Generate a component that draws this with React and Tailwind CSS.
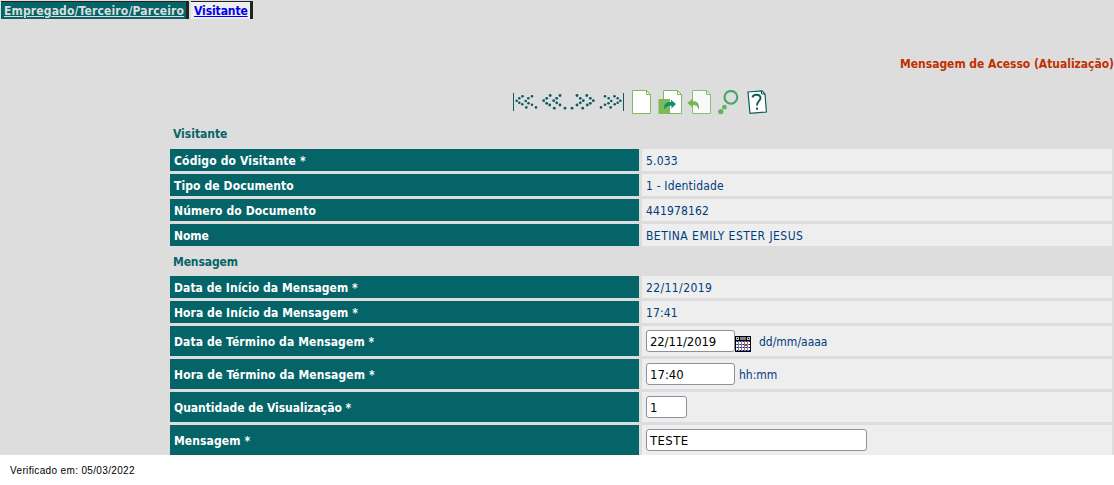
// Left half of the record navigation: "first" and "previous" double chevrons
const SMALL = [[3.7, 9.7], [6.3, 7.3], [9.5, 5.3], [6.3, 11.7], [9.3, 13.3], [13.3, 16.4], [12.7, 10], [15.3, 7.3], [19, 5.3], [15.5, 12.3], [19, 13.7], [23, 16.4]];
const LARGE = [[30.7, 9.7], [33.7, 7.3], [37.2, 4.5], [33.7, 12.3], [36.7, 14], [41.3, 17.2], [40.7, 9.7], [43.7, 7.3], [47, 4.5], [43.7, 11.8], [47, 14], [52, 17.2]];

function NavHalf() {
  return (
    <g fill="#0b5c5c">
      <rect x="0" y="2" width="1" height="18" />
      {SMALL.map(([x, y]) => <circle key={x + '-' + y} cx={x} cy={y} r="1.3" />)}
      {LARGE.map(([x, y]) => <circle key={x + '-' + y} cx={x} cy={y} r="1.4" />)}
    </g>
  );
}

function Page() {
  return (
    <>
      <path d="M.5 .5H14.5L18.5 4.5V23.5H.5Z" fill="#fff" stroke="#7dba5a" />
      <path d="M14.5 .5V4.5H18.5" fill="none" stroke="#7dba5a" />
    </>
  );
}

function Toolbar() {
  return (
    <div className="flex h-[30px] items-start pl-[513px] pt-px">
      <svg width="111" height="22" viewBox="0 0 111 22" className="mr-[8px] mt-px">
        <NavHalf />
        <g transform="translate(111 0) scale(-1 1)"><NavHalf /></g>
      </svg>
      <svg width="19" height="24" viewBox="0 0 19 24"><Page /></svg>
      <svg width="25" height="24" viewBox="0 0 25 24" className="ml-[7px]">
        <g transform="translate(5 0)"><Page /></g>
        <path d="M.5 9H12V24H.5Z" fill="#7cbb55" />
        <path d="M6.5 19.5C5.5 14 8 11.5 13 12V9.8L18 14L13.5 18.5V15.7C10 15.3 8 16.5 6.5 19.5Z" fill="#149070" />
      </svg>
      <svg width="25" height="24" viewBox="0 0 25 24" className="ml-[4px]">
        <g transform="translate(5 0)" opacity=".85"><Page /></g>
        <path d="M.3 13L5.5 8.8V11C10.5 11 13 14 11.8 20C11 16.5 9 15 5.5 14.8V17.2Z" fill="#76b84e" />
      </svg>
      <svg width="22" height="25" viewBox="0 0 22 25" className="ml-[6px]">
        <circle cx="12.9" cy="7.3" r="6.4" fill="none" stroke="#42a766" strokeWidth="2.1" />
        <circle cx="6.4" cy="17.2" r="2.4" fill="#65b35a" /><circle cx="2.8" cy="21.6" r="2.7" fill="#65b35a" />
      </svg>
      <svg width="21" height="24" viewBox="0 0 21 24" className="ml-[7px]">
        <path d="M1 2L15 .8L18 4L19.4 22L3 23.3Z" fill="#fff" stroke="#0b5c5c" strokeWidth="1.2" />
        <path d="M14.5 1V4H18" fill="none" stroke="#0b5c5c" />
        <path d="M5.5 7.5C6 3.6 13.5 3.8 13.5 8C13.5 11 10 11 10 15.5M10 17.5V19.8" fill="none" stroke="#0b5c5c" strokeWidth="1.9" />
      </svg>
    </div>
  );
}

function Calendar() {
  return (
    <svg width="16" height="16" viewBox="0 0 16 16" shapeRendering="crispEdges" className="mt-[5px] shrink-0">
      <rect width="16" height="16" fill="#000" />
      <rect x="1" y="1" width="3" height="3" fill="#c0c0c0" />
      <rect x="12" y="1" width="3" height="3" fill="#c0c0c0" />
      <rect x="5" y="1" width="6" height="3" fill="#808080" />
      <rect x="2" y="2" width="1" height="1" /><rect x="13" y="2" width="1" height="1" />
      <rect x="1" y="5" width="14" height="10" fill="#fff" />
      {[5, 8, 11, 14].map((y) => <rect key={y} x="1" y={y} width="14" height="1" fill="#808080" />)}
      {[3, 6, 9, 12].map((x) => <rect key={x} x={x} y="5" width="1" height="10" fill="#808080" />)}
      {[5, 8, 11, 14].map((y) => [2, 5, 8, 11, 14].map((x) => (
        <rect key={x + '-' + y} x={x} y={y} width="1" height="1" fill="#00f" />
      )))}
      <rect x="10" y="8" width="2" height="2" fill="#f20" />
    </svg>
  );
}

function Input({ value, className }) {
  return (
    <input defaultValue={value} className={`h-[22px] rounded-[3px] border border-[#8f8f9d] bg-white px-[3px] pt-px text-[13px] text-black outline-none ${className}`} />
  );
}

function Section({ children, className }) {
  return <div className={`flex items-center pl-[3px] font-bold text-[#056467] ${className}`}>{children}</div>;
}

function Row({ label, children, tall, track = 'tracking-[0.1px]' }) {
  return (
    <div className={`mb-[3px] flex shrink-0 gap-[3px] ${tall ? 'h-[30px]' : 'h-[22px]'}`}>
      <div className={`flex w-[469px] items-center bg-[#056467] pl-[4px] pt-[2px] font-bold text-white ${track}`}>{label}</div>
      <div className="flex w-[470px] items-center bg-[#eee] pl-[4px] text-[#003c7d]">{children}</div>
    </div>
  );
}

function Value({ children, className = '' }) {
  return <span className={`pt-[2px] ${className}`}>{children}</span>;
}

export default function App() {
  return (
    <div className="h-[485px] overflow-hidden whitespace-nowrap bg-white font-['DejaVu_Sans_Condensed','DejaVu_Sans',sans-serif] text-[12px] leading-[15px] [font-stretch:condensed]">
      <div className="h-[455px] overflow-hidden bg-[#ddd]">
        <div className="flex h-[20px] items-start pt-px font-bold">
          <a className="ml-px flex h-[18px] w-[188px] items-center border-r-[3px] border-t border-[#222] bg-[#056467] pl-[3px] pt-[2px] tracking-[0.15px] text-[#ddd] underline">Empregado/Terceiro/Parceiro</a>
          <a className="ml-[2px] flex h-[18px] w-[62px] items-center border-r-[3px] border-t border-[#222] bg-[#eee] pl-[3px] pt-[2px] tracking-[-0.1px] text-[#00e] underline">Visitante</a>
        </div>
        <div className="flex h-[69px] justify-end pt-[37px] font-bold tracking-[-0.03px] text-[#c03000]">Mensagem de Acesso (Atualização)</div>
        <Toolbar />
        <div className="pl-[170px]">
          <Section className="h-[30px] tracking-[-0.02px]">Visitante</Section>
          <Row track="tracking-[0.15px]" label="Código do Visitante *"><Value className="tracking-[0.2px]">5.033</Value></Row>
          <Row label="Tipo de Documento"><Value className="tracking-[0.18px]">1 - Identidade</Value></Row>
          <Row label="Número do Documento"><Value className="tracking-[0.12px]">441978162</Value></Row>
          <Row track="tracking-[-0.1px]" label="Nome"><Value className="tracking-[0.46px]">BETINA EMILY ESTER JESUS</Value></Row>
          <Section className="h-[27px] tracking-[-0.1px]">Mensagem</Section>
          <Row track="tracking-[0.07px]" label="Data de Início da Mensagem *"><Value className="tracking-[0.4px]">22/11/2019</Value></Row>
          <Row track="tracking-[0.06px]" label="Hora de Início da Mensagem *"><Value className="tracking-[0.15px]">17:41</Value></Row>
          <Row tall label="Data de Término da Mensagem *"><Input value="22/11/2019" className="w-[89px] tracking-[-0.13px]" /><Calendar /><Value className="ml-[8px]">dd/mm/aaaa</Value></Row>
          <Row tall label="Hora de Término da Mensagem *"><Input value="17:40" className="w-[89px]" /><Value className="ml-[4px]">hh:mm</Value></Row>
          <Row tall track="tracking-[-0.03px]" label="Quantidade de Visualização *"><Input value="1" className="w-[41px]" /></Row>
          <Row tall label="Mensagem *"><Input value="TESTE" className="w-[221px] tracking-[0.4px]" /></Row>
        </div>
      </div>
      <div className="pl-[10px] pt-[8px] font-['Liberation_Sans',sans-serif] text-[10px] tracking-[0.35px] text-black">Verificado em: 05/03/2022</div>
    </div>
  );
}
